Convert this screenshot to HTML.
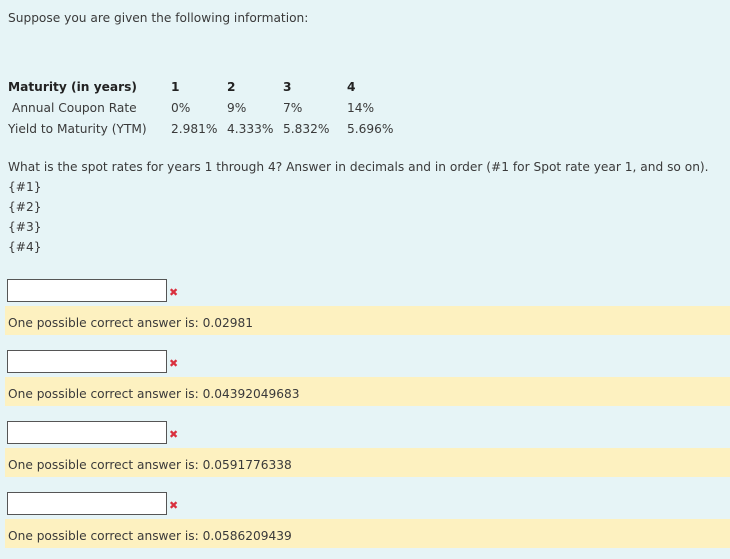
<!DOCTYPE html>
<html><head><style>
body{margin:0;width:730px;height:559px;background:#e6f4f6;font-family:"DejaVu Sans","Liberation Sans",sans-serif;font-size:12.2px;color:#3a3a3a;position:relative;overflow:hidden}
.t{position:absolute;white-space:nowrap;line-height:16px}
b{color:#222}
.in{position:absolute;left:7px;width:158px;height:21px;background:#fff;border:1px solid #555}
.x{position:absolute;left:169px;color:#d9303e;font-weight:bold;font-size:11px}
.y{position:absolute;left:5px;width:725px;height:29px;background:#fdf1c0}
.y span{position:absolute;left:3px;top:9px;line-height:16px}
</style></head><body>
<div class="t" style="left:8px;top:10px">Suppose you are given the following information:</div>
<div class="t" style="left:8px;top:79px"><b>Maturity (in years)</b></div>
<div class="t" style="left:171px;top:79px"><b>1</b></div>
<div class="t" style="left:227px;top:79px"><b>2</b></div>
<div class="t" style="left:283px;top:79px"><b>3</b></div>
<div class="t" style="left:347px;top:79px"><b>4</b></div>
<div class="t" style="left:12px;top:100px">Annual Coupon Rate</div>
<div class="t" style="left:171px;top:100px">0%</div>
<div class="t" style="left:227px;top:100px">9%</div>
<div class="t" style="left:283px;top:100px">7%</div>
<div class="t" style="left:347px;top:100px">14%</div>
<div class="t" style="left:8px;top:121px">Yield to Maturity (YTM)</div>
<div class="t" style="left:171px;top:121px">2.981%</div>
<div class="t" style="left:227px;top:121px">4.333%</div>
<div class="t" style="left:283px;top:121px">5.832%</div>
<div class="t" style="left:347px;top:121px">5.696%</div>
<div class="t" style="left:8px;top:159px">What is the spot rates for years 1 through 4? Answer in decimals and in order (#1 for Spot rate year 1, and so on).</div>
<div class="t" style="left:8px;top:179px">{#1}</div>
<div class="t" style="left:8px;top:199px">{#2}</div>
<div class="t" style="left:8px;top:219px">{#3}</div>
<div class="t" style="left:8px;top:239px">{#4}</div>

<div class="in" style="top:279px"></div><div class="x t" style="top:285px">✖</div>
<div class="y" style="top:306px"><span>One possible correct answer is: 0.02981</span></div>
<div class="in" style="top:350px"></div><div class="x t" style="top:356px">✖</div>
<div class="y" style="top:377px"><span>One possible correct answer is: 0.04392049683</span></div>
<div class="in" style="top:421px"></div><div class="x t" style="top:427px">✖</div>
<div class="y" style="top:448px"><span>One possible correct answer is: 0.0591776338</span></div>
<div class="in" style="top:492px"></div><div class="x t" style="top:498px">✖</div>
<div class="y" style="top:519px"><span>One possible correct answer is: 0.0586209439</span></div>
</body></html>
